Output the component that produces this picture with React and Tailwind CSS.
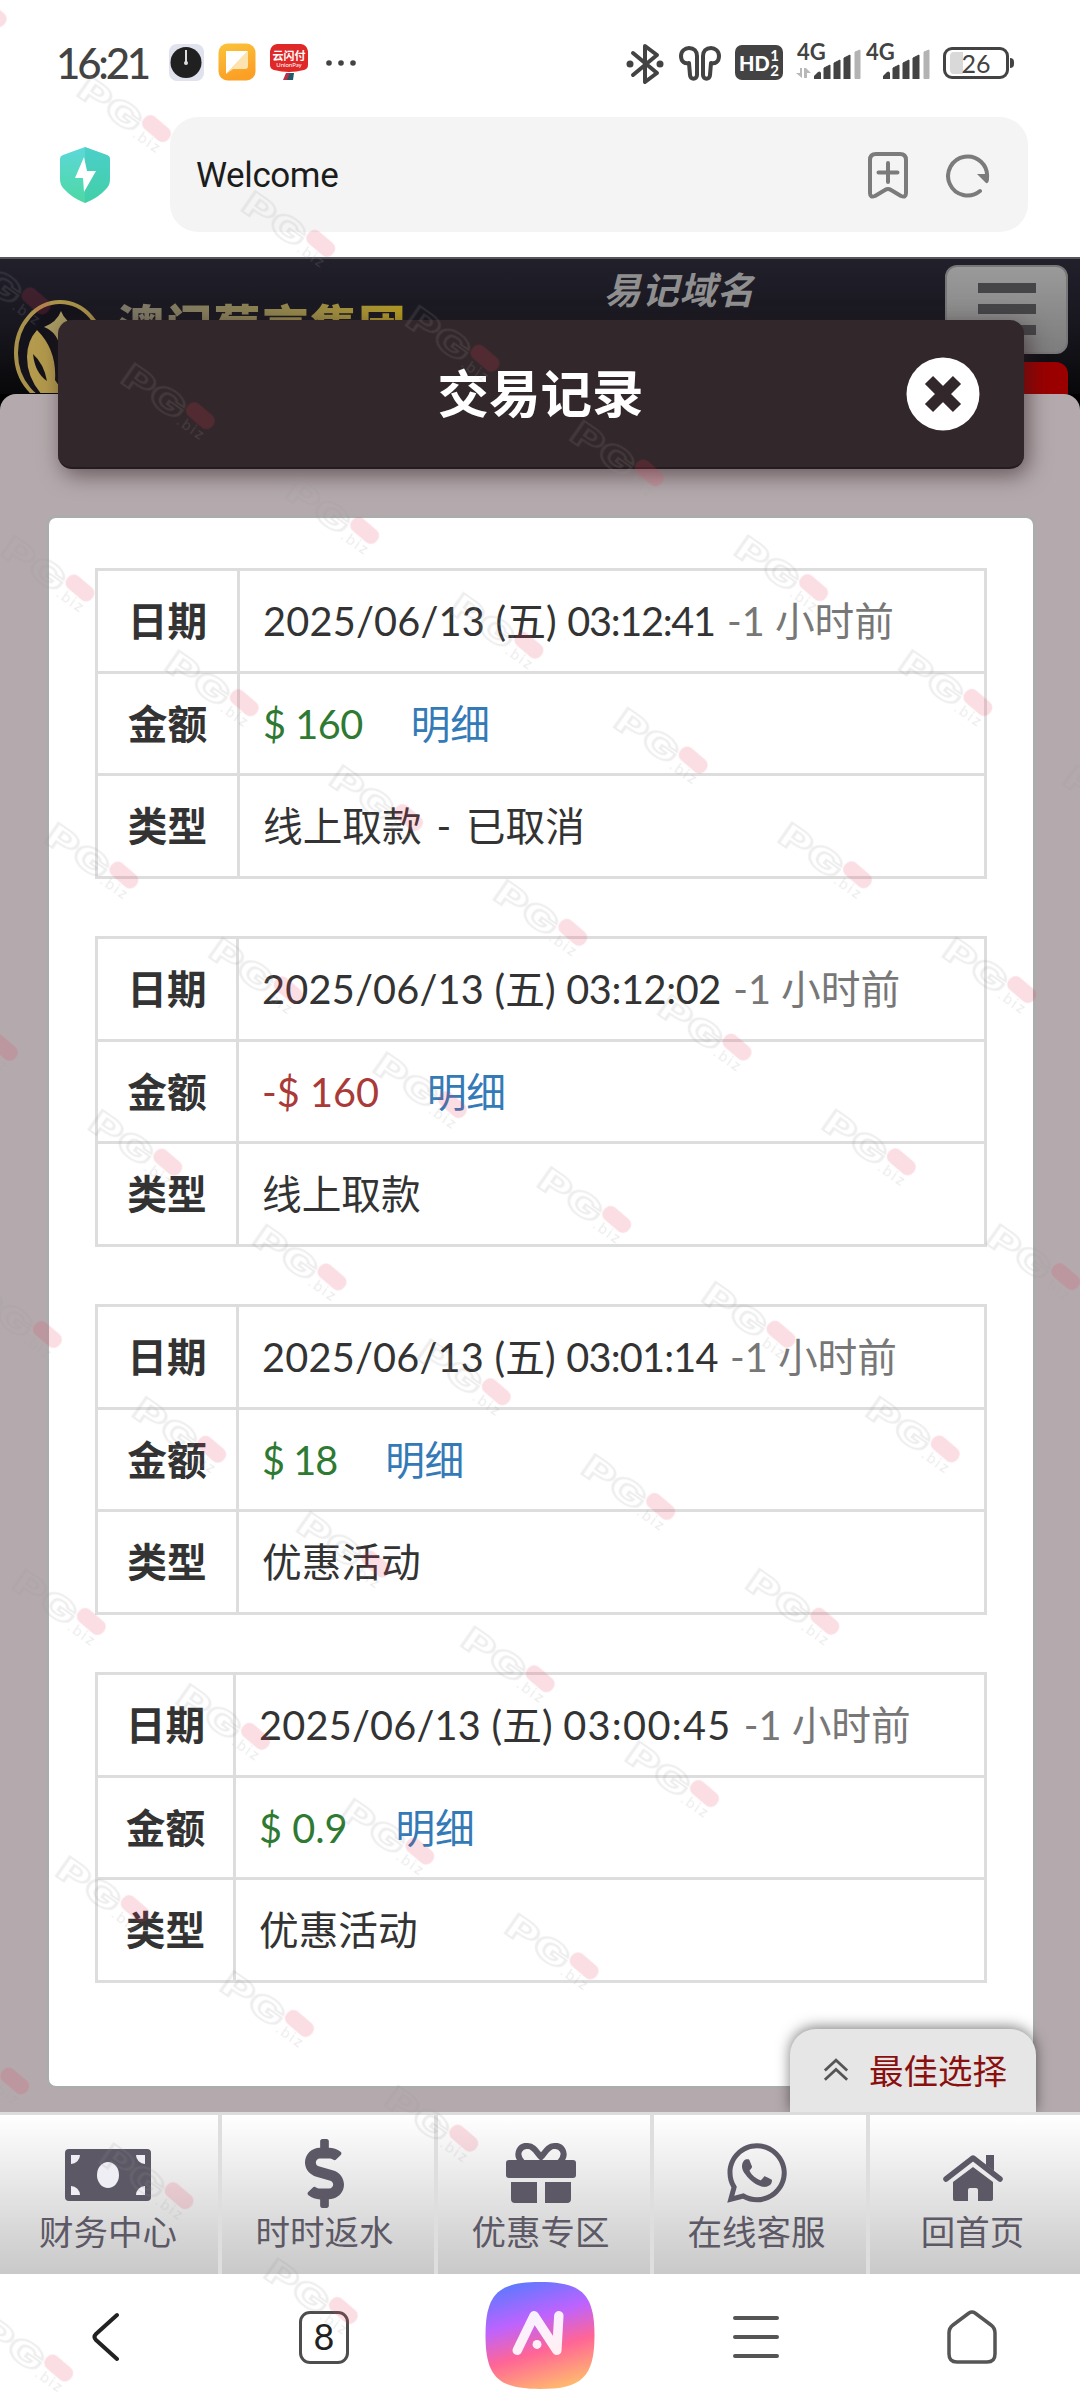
import React from 'react'
import { FaDollarSign, FaWhatsapp } from 'react-icons/fa'
import clsx from 'clsx'

const RECORDS = [
  {
    date: '2025/06/13', time: '03:12:41', amount: '$ 160', type: '线上取款 - 已取消',
    head: 'w-[142px]', timeTracking: 'tracking-[-1.300px]', amountTracking: 'tracking-[-0.500px]',
  },
  {
    date: '2025/06/13', time: '03:12:02', amount: '-$ 160', type: '线上取款',
    head: 'w-[141px]', timeTracking: 'tracking-[-0.400px]', amountTracking: 'tracking-normal',
  },
  {
    date: '2025/06/13', time: '03:01:14', amount: '$ 18', type: '优惠活动',
    head: 'w-[141px]', timeTracking: 'tracking-[-0.800px]', amountTracking: 'tracking-[-1px]',
  },
  {
    date: '2025/06/13', time: '03:00:45', amount: '$ 0.9', type: '优惠活动',
    head: 'w-[138px]', timeTracking: 'tracking-[1.300px]', amountTracking: 'tracking-normal',
  },
]

const TABS = [
  { label: '财务中心', icon: MoneyIcon },
  { label: '时时返水', icon: () => <FaDollarSign className="h-[69px] w-[39px]" preserveAspectRatio="none" /> },
  { label: '优惠专区', icon: GiftIcon },
  { label: '在线客服', icon: () => <FaWhatsapp className="h-[68px] w-[68px]" /> },
  { label: '回首页', icon: HomeIcon },
]

function MoneyIcon() {
  return (
    <svg width="86" height="52" viewBox="0 0 86 52" className="mt-[3px]">
      <rect width="86" height="52" rx="4" fill="#5c5865" />
      <ellipse cx="43" cy="26" rx="11" ry="13" fill="#eeeef4" />
      <path d="M6 6h9a9 9 0 0 1-9 9zM80 6h-9a9 9 0 0 0 9 9zM6 46h9a9 9 0 0 0-9-9zM80 46h-9a9 9 0 0 1 9-9z" fill="#eeeef4" />
    </svg>
  )
}

function GiftIcon() {
  return (
    <svg width="70" height="61" viewBox="0 0 70 61" fill="#5c5865">
      <path d="M16 19C8 10 15 2 22 3c6 0 9 7 13 11C39 10 42 3 48 3c7-1 14 7 6 16" fill="none" stroke="#5c5865" strokeWidth="6" />
      <rect y="17" width="70" height="18" rx="3" />
      <path d="M5 39h26v21H9q-4 0-4-4zM39 39h26v17q0 4-4 4H39z" />
    </svg>
  )
}

function HomeIcon() {
  return (
    <svg width="60" height="48" viewBox="0 0 60 48" className="mt-[10px]">
      <path d="M3 25 30 4l27 21" fill="none" stroke="#5c5865" strokeWidth="5.500" strokeLinecap="round" strokeLinejoin="round" />
      <path d="M43 1h8v16l-8-6z" fill="#5c5865" />
      <path d="M30 13 50 28v17a2 2 0 0 1-2 2H35V36a2 2 0 0 0-2-2h-6a2 2 0 0 0-2 2v11H12a2 2 0 0 1-2-2V28z" fill="#5c5865" />
    </svg>
  )
}

// ── Phone status bar ─────────────────────────────────────────────
function SignalBars() {
  return (
    <svg width="47" height="30" viewBox="0 0 47 30">
      <path d="M0 30v-3l4-4a2 2 0 0 1 3 1v6z" fill="#434343" />
      <path d="M10 30V19l6-3v14zM20 30V14l6-3v19zM30 30V9l6-3v24z" fill="#434343" stroke="#434343" strokeLinejoin="round" />
      <path d="M41 29.500V3l5-2v28.500z" fill="#b3b3b3" stroke="#b3b3b3" strokeLinejoin="round" />
    </svg>
  )
}

function Signal({ data }) {
  return (
    <div className="relative h-[35px] w-[69px]">
      <span className="absolute -left-px -top-[3px] font-['Lato'] text-[22px] leading-[21px] font-bold text-[#434343]">4G</span>
      {data && (
        <svg className="absolute -left-[3px] bottom-0" width="17" height="12" viewBox="0 0 17 12">
          <path d="M7 1v10L1 6h4V1zM9 11V1h2l5 5h-4v5z" fill="#b8b8b8" />
        </svg>
      )}
      <div className="absolute bottom-0 left-[16px]"><SignalBars /></div>
    </div>
  )
}

function StatusBar() {
  return (
    <div className="flex h-[117px] items-start pt-[43px] pl-[56px] font-['Lato'] text-[#434343]">
      <div className="w-[111px] text-[42px] leading-[40px] font-medium tracking-[-3.200px]">16:21</div>
      <svg width="38" height="38" viewBox="0 0 38 38">
        <rect x="2" y="1" width="35" height="37" rx="8" fill="#e0e2ee" />
        <circle cx="19" cy="19.500" r="15.500" fill="#202020" />
        <path d="M19 7v12" stroke="#ddd" strokeWidth="2" />
        <circle cx="19" cy="20" r="2" fill="#ddd" />
      </svg>
      <svg width="38" height="38" viewBox="0 0 38 38" className="ml-[13px]">
        <defs>
          <linearGradient id="note" x1="0" y1="0" x2="0.300" y2="1">
            <stop offset="0" stopColor="#fbc43a" />
            <stop offset="1" stopColor="#fb9f25" />
          </linearGradient>
        </defs>
        <rect x="0.500" y="0.500" width="37" height="37" rx="9" fill="url(#note)" />
        <path d="M8 8h22L8 31z" fill="#fff" />
        <path d="M30 8v15a3 3 0 0 1-3 3H15L8 31z" fill="#fde3b0" />
      </svg>
      <div className="relative ml-[14px] h-[38px] w-[38px]">
        <svg width="38" height="38" viewBox="0 0 38 38">
          <path d="M0 8Q1 2 7 1h24q6 1 7 7v14q0 4-4 5-15 4-30 0-4-1-4-5z" fill="#e02828" />
          <path d="M16 30h5l-3 7h-5z" fill="#b5304a" />
          <path d="M20 30h4l-1 7h-6z" fill="#1d5a6a" />
        </svg>
        <span className="absolute inset-x-0 top-[6px] text-center font-['Noto_Sans_CJK_SC'] text-[11px] leading-[12px] font-bold whitespace-nowrap text-white">云闪付</span>
        <span className="absolute inset-x-0 top-[18px] text-center text-[6px] leading-[7px] text-white">UnionPay</span>
      </div>
      <svg width="32" height="38" viewBox="0 0 32 38" className="ml-[16px]">
        <g fill="#434343">
          <circle cx="5" cy="20" r="2.800" />
          <circle cx="17" cy="20" r="2.800" />
          <circle cx="29" cy="20" r="2.800" />
        </g>
      </svg>

      <svg width="38" height="42" viewBox="0 0 38 42" className="ml-[270px]">
        <path d="M7 10l24 20-12 9V3l12 9L7 32" fill="none" stroke="#434343" strokeWidth="4" strokeLinejoin="round" strokeLinecap="round" />
        <circle cx="4" cy="21" r="3.500" fill="#434343" />
        <circle cx="34" cy="21" r="3.500" fill="#434343" />
      </svg>
      <svg width="44" height="40" viewBox="0 0 44 40" className="ml-[14px]">
        <g fill="none" stroke="#434343" strokeWidth="4" strokeLinejoin="round">
          <path d="M11 20c-4 1-8-1-8-7 0-5 4-8 8-8 5 0 8 3 8 8v19c0 5-7 5-7 0z" />
          <path d="M33 20c4 1 8-1 8-7 0-5-4-8-8-8-5 0-8 3-8 8v19c0 5 7 5 7 0z" />
        </g>
      </svg>
      <div className="relative mt-[2px] ml-[13px] h-[35px] w-[48px] rounded-[7px] bg-[#434343] text-white">
        <span className="absolute top-[8px] left-[4px] text-[20px] leading-[20px] font-black">HD</span>
        <span className="absolute top-[3px] right-[4px] text-[15px] leading-[15px] font-bold">1</span>
        <span className="absolute right-[4px] bottom-[2px] text-[15px] leading-[15px] font-bold">2</span>
      </div>
      <div className="mt-px ml-[15px] flex">
        <Signal data />
        <Signal />
      </div>
      <div className="relative mt-[4px] ml-[7px] flex h-[32px] w-[66px] items-center justify-center rounded-[9px] border-[3px] border-[#434343]">
        <div className="absolute top-[2px] left-[4px] h-[22px] w-[13px] rounded-l-[4px] bg-[#d9d9d9]" />
        <span className="relative text-[25px] leading-[24px]">26</span>
        <div className="absolute top-[8px] -right-[8px] h-[10px] w-[4px] rounded-r bg-[#434343]" />
      </div>
    </div>
  )
}

function AddressBar() {
  return (
    <div className="flex h-[140px] items-start pl-[60px]">
      <svg width="50" height="56" viewBox="0 0 50 56" className="mt-[30px]">
        <defs>
          <linearGradient id="shield" x1="0" y1="0" x2="0" y2="1">
            <stop offset="0" stopColor="#5cd8d8" />
            <stop offset="1" stopColor="#4dd8a4" />
          </linearGradient>
        </defs>
        <path d="M25 0 47 8q3 1 3 4v20q0 6-4 10-8 9-21 14Q12 51 4 42 0 38 0 32V12q0-3 3-4z" fill="url(#shield)" />
        <path d="M25 0 47 8q3 1 3 4v20q0 6-4 10-8 9-21 14z" fill="#2fbfae" opacity="0.350" />
        <path d="M24 10 15 31h8l1 14 12-21h-9z" fill="#fff" />
      </svg>
      <div className="ml-[60px] flex h-[115px] w-[858px] items-center rounded-[28px] bg-[#f4f4f4] pl-[26px]">
        <span className="pt-[3px] font-['Roboto'] text-[35px] tracking-[-0.400px] text-[#1c1c1c]">Welcome</span>
        <svg width="42" height="48" viewBox="0 0 42 48" className="ml-auto" fill="none" stroke="#7b7b7b" strokeWidth="4" strokeLinejoin="round" strokeLinecap="round">
          <path d="M3 9q0-6 6-6h24q6 0 6 6v33q0 5-5 3l-10-6q-3-2-6 0L8 45q-5 2-5-3z" />
          <path d="M21 12v19M11.500 21.500h19" />
        </svg>
        <svg width="44" height="46" viewBox="0 0 44 46" className="mr-[38px] ml-[37px]">
          <path d="M34 39A19.500 19.500 0 1 1 41 26" fill="none" stroke="#7b7b7b" strokeWidth="4" strokeLinecap="round" />
          <path d="M31 22h12v4q0 6-3 5z" fill="#7b7b7b" />
        </svg>
      </div>
    </div>
  )
}

// ── Dimmed site header behind the dialog ─────────────────────────
function SiteHeader() {
  return (
    <div className="flex h-[137px] items-start overflow-hidden border-t-2 border-[#55555c] bg-linear-to-b from-[#21202b] via-[#18171f] via-50% to-[#08080a]">
      <svg width="100" height="134" viewBox="0 0 100 134" className="ml-[13px] shrink-0">
        <ellipse cx="47" cy="94" rx="44" ry="51" fill="#14121a" stroke="#a8924a" strokeWidth="4" />
        <path d="M48 52q4 11 17 16-14 5-17 24-3-19-17-24 13-5 17-16z" fill="#a89a62" />
        <path d="M24 71q20 20 18 50 4 8 14 8v12H34Q14 122 14 98q0-16 10-27z" fill="#b39a4c" />
        <path d="M20 95q11 10 14 27-12-8-14-27z" fill="#14121a" />
      </svg>
      <div className="mt-[39px] ml-[4px] bg-linear-to-r from-[#7d786a] via-[#8d8352] to-[#b39a1e] bg-clip-text font-['Noto_Sans_CJK_SC'] text-[47px] leading-[52px] font-black tracking-[1.300px] whitespace-nowrap text-transparent">
        澳门葡京集团
      </div>
      <div className="mt-[4px] ml-[197px] font-['Noto_Sans_CJK_SC'] text-[37px] leading-[50px] font-bold tracking-[0.700px] whitespace-nowrap text-[#8f8f8f] italic">
        易记域名
      </div>
      <div className="mt-[6px] mr-[12px] ml-auto w-[123px]">
        <div className="flex h-[89px] flex-col items-center gap-[11px] rounded-[12px] border-2 border-[#777] bg-linear-to-b from-[#9a9a9a] to-[#7d7d7d] pt-[16px]">
          <div className="h-[10px] w-[58px] bg-[#454548]" />
          <div className="h-[10px] w-[58px] bg-[#454548]" />
          <div className="h-[10px] w-[58px] bg-[#454548]" />
        </div>
        <div className="mt-[8px] h-[50px] rounded-t-[12px] bg-[#9b0000]" />
      </div>
    </div>
  )
}

function TitleBar() {
  return (
    <div className="absolute top-[320px] left-[58px] flex h-[149px] w-[966px] items-center rounded-[14px] border-b-2 border-[#251c1f] bg-[#32272a] shadow-[4px_6px_22px_rgba(50,30,35,0.6)]">
      <h1 className="flex-1 pl-[117px] text-center text-[51.500px] leading-none font-bold text-white">交易记录</h1>
      <button className="mr-[44px]">
        <svg width="74" height="74" viewBox="0 0 74 74">
          <circle cx="37" cy="37" r="36.500" fill="#fff" />
          <path d="m23 23 28 28M51 23 23 51" stroke="#32272a" strokeWidth="11.500" />
        </svg>
      </button>
    </div>
  )
}

// ── Transaction list ─────────────────────────────────────────────
function Row({ label, head, height, last, children }) {
  return (
    <div className={clsx('flex', height, !last && 'border-b-[3px] border-[#ddd]')}>
      <div className={clsx('flex shrink-0 items-center justify-center border-r-[3px] border-[#ddd] font-bold', head)}>
        {label}
      </div>
      <div className="flex items-center pl-[23px] whitespace-pre">{children}</div>
    </div>
  )
}

function Record({ date, time, amount, type, head, timeTracking, amountTracking }) {
  return (
    <div className="border-[3px] border-[#ddd]">
      <Row label="日期" head={head} height="h-[103px]">
        <span className="tracking-[0.200px]">{date} (五) </span>
        <span className={timeTracking}>{time}</span>
        <span className="ml-[2px] text-[#777]"> -1 小时前</span>
      </Row>
      <Row label="金额" head={head} height="h-[102px]">
        <span className={clsx(amountTracking, amount.startsWith('-') ? 'text-[#a93a38]' : 'text-[#2f7a33]')}>{amount}</span>
        <a className="ml-[48px] tracking-[-0.300px] text-[#337ab7]">明细</a>
      </Row>
      <Row label="类型" head={head} height="h-[100px]" last>
        <span className="[word-spacing:4.500px]">{type}</span>
      </Row>
    </div>
  )
}

function BestChoice() {
  return (
    <div className="absolute top-[2029px] left-[790px] flex h-[84px] w-[246px] items-center rounded-t-[26px] bg-[#e6e6e6] pl-[33px] shadow-[0_-2px_14px_rgba(0,0,0,0.5)]">
      <svg width="26" height="25" viewBox="0 0 28 26" fill="none" stroke="#555" strokeWidth="3" className="mb-[4px]">
        <path d="M2 14 14 3l12 11M2 24l12-11 12 11" />
      </svg>
      <span className="ml-[20px] text-[34.500px] leading-none text-[#8a1010]">最佳选择</span>
    </div>
  )
}

function BottomTabs() {
  return (
    <nav className="relative grid h-[162px] grid-cols-5 border-t-[3px] border-[#dcdcdc] bg-linear-to-b from-white to-[#c9c9c9]">
      {TABS.map(({ label, icon: Icon }, i) => (
        <div
          key={label}
          className={clsx(
            'flex flex-col items-center text-[#5c5865]',
            i > 0 && 'ml-[2px] border-l-4 border-[#dedede] pr-[5px]'
          )}
        >
          <div className="mt-[20px] flex h-[76px] items-center">
            <Icon />
          </div>
          <span className="text-[34.500px] leading-[42px]">{label}</span>
        </div>
      ))}
    </nav>
  )
}

function BrowserBar() {
  return (
    <div className="grid h-[126px] grid-cols-5 place-items-center bg-white">
      <svg width="30" height="50" viewBox="0 0 30 50" className="-ml-[4px]">
        <path d="M26 3 5 22q-3 3 0 6l21 19" fill="none" stroke="#222" strokeWidth="4" strokeLinecap="round" />
      </svg>
      <div className="flex h-[53px] w-[50px] items-center justify-center rounded-[11px] border-[3px] border-[#4d4d4d] pb-[3px] font-['Lato'] text-[36px] leading-none text-[#222]">8</div>
      <svg width="110" height="107" viewBox="0 0 110 108" className="mb-[4px]">
        <defs>
          <linearGradient id="ai" x1="0.300" y1="0" x2="0.600" y2="1">
            <stop offset="0" stopColor="#5f78ff" />
            <stop offset="0.350" stopColor="#bd63ff" />
            <stop offset="0.650" stopColor="#ff6596" />
            <stop offset="1" stopColor="#ffb670" />
          </linearGradient>
        </defs>
        <path d="M55 0c42 0 55 12 55 54s-13 54-55 54S0 96 0 54 13 0 55 0z" fill="url(#ai)" />
        <path d="M32 69 49 34 72 69 74 34" fill="none" stroke="#fff" strokeOpacity="0.900" strokeWidth="9.500" strokeLinecap="round" strokeLinejoin="round" />
        <circle cx="52" cy="63" r="4.500" fill="#fff" fillOpacity="0.900" />
      </svg>
      <svg width="46" height="44" viewBox="0 0 46 44">
        <path d="M2 3h42M2 22h42M2 41h42" stroke="#555" strokeWidth="4" strokeLinecap="round" />
      </svg>
      <svg width="50" height="54" viewBox="0 0 50 54">
        <path d="M22 3q3-2 6 0l16 12q4 3 4 8v21q0 8-8 8H10q-8 0-8-8V23q0-5 4-8z" fill="none" stroke="#555" strokeWidth="3.500" />
      </svg>
    </div>
  )
}

// Tiled stamp, one tile is 200.4 x 210.2 on a grid turned by 35 degrees
function Watermark() {
  return (
    <svg className="pointer-events-none absolute inset-0" width="1080" height="2400">
      <defs>
        <pattern id="stamp" width="200.400" height="210.200" patternUnits="userSpaceOnUse">
          <text x="64" y="119" fontSize="32" textLength="70" lengthAdjust="spacingAndGlyphs" fontFamily="Inter" fontWeight="800" fill="none" stroke="#999" strokeOpacity="0.160" strokeWidth="2">PG</text>
          <rect x="134" y="92" width="32" height="16" rx="7" fill="#e63c5a" opacity="0.170" transform="rotate(5 150 100)" />
          <text x="134" y="121" fontSize="14" fontFamily="Inter" letterSpacing="2" fill="#999" fillOpacity="0.200">.biz</text>
        </pattern>
      </defs>
      <g transform="translate(80 588) rotate(34.940) translate(-150 -100)">
        <rect x="-1202.400" y="-420.400" width="2605.200" height="2522.400" fill="url(#stamp)" />
      </g>
    </svg>
  )
}

export default function App() {
  return (
    <div className="relative h-[2400px] w-[1080px] overflow-hidden bg-white font-['Lato','Noto_Sans_CJK_SC',sans-serif]">
      <StatusBar />
      <AddressBar />
      <SiteHeader />
      <div className="h-[1718px] bg-linear-to-b from-black from-[20px] to-[#b4aaad] to-[20px]">
        <div className="h-full rounded-t-[16px] bg-[#b4aaad] pt-[121px] pr-[44px] pl-[46px]">
          <div className="h-[1574px] rounded-[10px] border-[3px] border-[#acacac] bg-white px-[46px] pt-[50px] text-[39.700px] text-[#333]">
            <div className="flex flex-col gap-[57px]">
              {RECORDS.map((r) => <Record key={r.time} {...r} />)}
            </div>
          </div>
        </div>
      </div>
      <TitleBar />
      <BestChoice />
      <BottomTabs />
      <BrowserBar />
      <Watermark />
    </div>
  )
}
